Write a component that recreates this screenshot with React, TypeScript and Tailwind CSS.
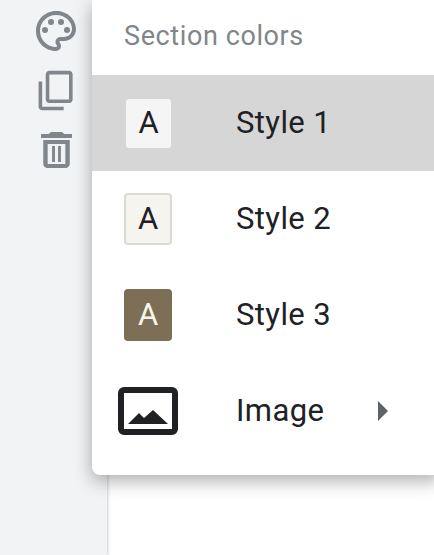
export default function App() {
  const font = { fontFamily: "Roboto, sans-serif" };
  return (
    <div className="relative flex h-[555px] w-[434px] overflow-hidden bg-white" style={font}>
      <aside className="flex w-[107px] shrink-0 flex-col gap-[14px] bg-[#f1f3f5] pt-[7px] pl-[32px] shadow-[1px_0_3px_rgba(0,0,0,0.2)]">
        <svg viewBox="0 0 24 24" className="h-[48px] w-[48px] fill-[#80868b]">
          <path d="M12 22C6.49 22 2 17.51 2 12S6.49 2 12 2s10 4.04 10 9c0 3.31-2.69 6-6 6h-1.77c-.28 0-.5.22-.5.5 0 .12.05.23.13.33.41.47.64 1.06.64 1.67A2.5 2.5 0 0 1 12 22zm0-18c-4.41 0-8 3.59-8 8s3.59 8 8 8c.28 0 .5-.22.5-.5a.54.54 0 0 0-.14-.35c-.41-.46-.63-1.05-.63-1.65a2.5 2.5 0 0 1 2.5-2.5H16c2.21 0 4-1.79 4-4 0-3.86-3.59-7-8-7z" />
          <circle cx="6.5" cy="11.5" r="1.5" />
          <circle cx="9.5" cy="7.5" r="1.5" />
          <circle cx="14.5" cy="7.5" r="1.5" />
          <circle cx="17.5" cy="11.5" r="1.5" />
        </svg>
        <svg viewBox="0 0 24 24" className="ml-[3px] h-[43px] w-[43px] -scale-y-100 fill-[#80868b]">
          <path d="M16 1H4c-1.1 0-2 .9-2 2v14h2V3h12V1zm3 4H8c-1.1 0-2 .9-2 2v14c0 1.1.9 2 2 2h11c1.1 0 2-.9 2-2V7c0-1.1-.9-2-2-2zm0 16H8V7h11v14z" />
        </svg>
        <svg viewBox="0 0 24 24" preserveAspectRatio="none" className="-ml-[2px] h-[48px] w-[53px] fill-[#80868b]">
          <path d="M16 9v10H8V9h8m-1.5-6h-5l-1 1H5v2h14V4h-3.5l-1-1zM18 7H6v12c0 1.1.9 2 2 2h8c1.1 0 2-.9 2-2V7z" />
          <rect x="10" y="10" width="1.3" height="8" />
          <rect x="12.7" y="10" width="1.3" height="8" />
        </svg>
      </aside>
      <div className="absolute top-0 left-[92px] w-[350px] rounded-b-[8px] bg-white pb-[16px] shadow-[0_6px_18px_rgba(0,0,0,0.32)]">
        <div className="flex h-[75px] items-center pb-[3px] pl-[32px] text-[27px] tracking-[0.6px] text-[#80868b]">Section colors</div>
        <div className="flex h-[96px] items-center bg-[#d6d6d6]">
          <div className="ml-[34px] flex h-[49px] w-[45px] items-center justify-center rounded-[3px] bg-[#f5f5f5] text-[31px] text-[#202124]">A</div>
          <span className="ml-[65px] text-[31px] tracking-[0.4px] text-[#202124]">Style 1</span>
        </div>
        <div className="flex h-[96px] items-center">
          <div className="ml-[32px] flex h-[52px] w-[48px] items-center justify-center rounded-[4px] border-2 border-[#dadad6] bg-[#f6f4ef] text-[31px] text-[#202124]">A</div>
          <span className="ml-[64px] text-[31px] tracking-[0.4px] text-[#202124]">Style 2</span>
        </div>
        <div className="flex h-[96px] items-center">
          <div className="ml-[32px] flex h-[52px] w-[48px] items-center justify-center rounded-[4px] bg-[#7d6f55] text-[31px] text-[#f8f5ee]">A</div>
          <span className="ml-[64px] text-[31px] tracking-[0.4px] text-[#202124]">Style 3</span>
        </div>
        <div className="flex h-[96px] items-center">
          <svg viewBox="0 0 60 48" className="ml-[26px] h-[48px] w-[60px] shrink-0">
            <rect x="3" y="3" width="54" height="42" rx="3" fill="none" stroke="#202124" strokeWidth="6" />
            <path d="M10 37 L21 26 L26 31 L35 23 L50 37 Z" fill="#202124" />
          </svg>
          <span className="ml-[58px] w-[142px] text-[31px] tracking-[0.4px] text-[#202124]">Image</span>
          <svg viewBox="0 0 10 20" className="h-[20px] w-[10px]">
            <path d="M0 0 L10 10 L0 20 Z" fill="#5f6368" />
          </svg>
        </div>
      </div>
    </div>
  );
}
